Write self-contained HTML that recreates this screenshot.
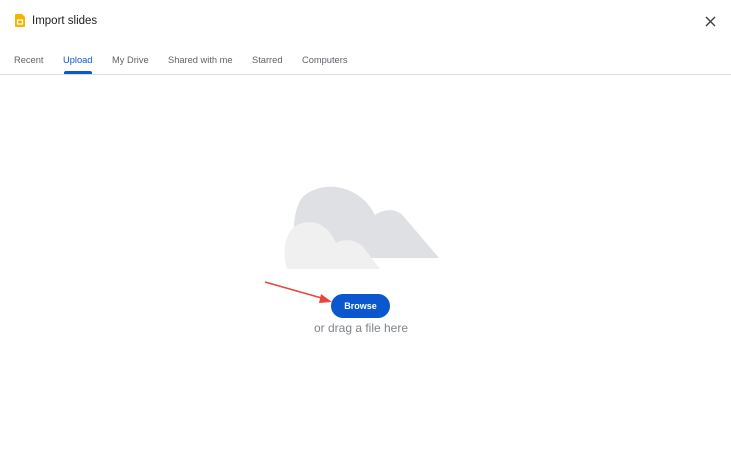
<!DOCTYPE html>
<html><head><style>
body{margin:0;width:731px;height:450px;background:#fff;font-family:"Liberation Sans",sans-serif;position:relative;overflow:hidden}
.t{position:absolute;font-size:9.3px;color:#5f6368;top:55px}
</style></head><body>
<svg style="position:absolute;left:15px;top:14px" width="10" height="13" viewBox="0 0 10 13"><path d="M1 0h6l3 3v9a1 1 0 0 1-1 1H1a1 1 0 0 1-1-1V1a1 1 0 0 1 1-1z" fill="#f4b400"/><rect x="2.5" y="6" width="5" height="4" fill="none" stroke="#fff" stroke-width="1.2"/></svg>
<div style="position:absolute;left:32px;top:15px;font-size:11.5px;color:#202124">Import slides</div>
<svg style="position:absolute;left:705px;top:16px" width="11" height="11" viewBox="0 0 11 11"><path d="M1 1L10 10M10 1L1 10" stroke="#3c4043" stroke-width="1.4"/></svg>
<div class="t" style="left:14px">Recent</div>
<div class="t" style="left:63px;color:#0b57d0">Upload</div>
<div style="position:absolute;left:64px;top:71px;width:28px;height:3px;background:#0b57d0;border-radius:2px 2px 0 0"></div>
<div class="t" style="left:112px">My Drive</div>
<div class="t" style="left:168px">Shared with me</div>
<div class="t" style="left:252px">Starred</div>
<div class="t" style="left:302px">Computers</div>
<div style="position:absolute;left:0;top:74px;width:731px;height:1px;background:#dadce0"></div>
<svg style="position:absolute;left:0;top:0" width="731" height="450">
<path d="M296 258 C292 240 292 205 305 195 C325 180 360 185 375 215 C385 208 398 208 405 218 L439 258 Z" fill="#dfe0e4"/>
<path d="M287 269 C282 255 284 232 297 225 C312 218 328 224 336 243 C345 238 358 240 364 248 L380 269 Z" fill="#f0f0f1"/>
<path d="M265 282 L325 299" stroke="#e8453c" stroke-width="1.5"/>
<path d="M332 302 L321 294 L319 303 Z" fill="#e8453c"/>
</svg>
<div style="position:absolute;left:331px;top:294px;width:59px;height:24px;border-radius:12px;background:#0b57d0;color:#fff;font-size:9px;font-weight:bold;text-align:center;line-height:24px">Browse</div>
<div style="position:absolute;left:261px;width:200px;top:321px;text-align:center;font-size:12px;color:#80868b">or drag a file here</div>
</body></html>
